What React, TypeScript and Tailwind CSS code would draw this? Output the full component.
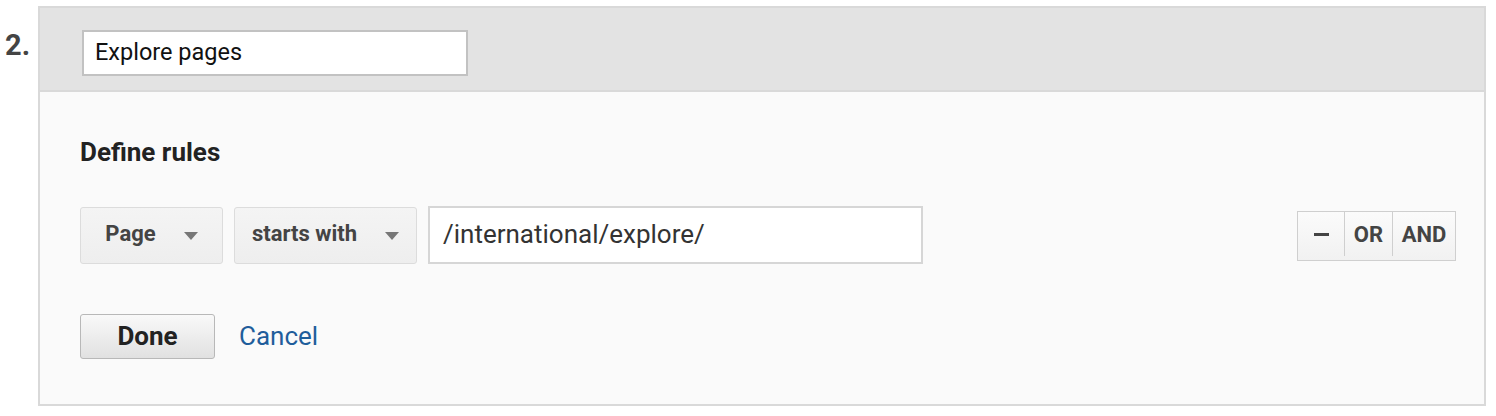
export default function App() {
  const font = { fontFamily: "Roboto, 'Liberation Sans', sans-serif" };
  return (
    <div className="flex h-[416px] w-[1496px] bg-white" style={font}>
      <div className="w-[38px] shrink-0 pl-[5px] pt-[27px] text-[29px] font-bold leading-[36px] text-[#444]">
        2.
      </div>

      <div className="mt-[6px] flex h-[400px] w-[1448px] flex-col border-2 border-[#d9d9d9]">
        <header className="h-[84px] shrink-0 border-b-2 border-[#d9d9d9] bg-[#e3e3e3] pl-[42px] pt-[22px]">
          <div className="flex h-[46px] w-[386px] items-center border-2 border-[#c2c2c2] bg-white pl-[11px] text-[23.5px] text-[#111]">
            Explore pages
          </div>
        </header>

        <div className="flex flex-1 flex-col bg-[#fafafa] pl-[40px] pr-[28px] pt-[44px]">
          <h2 className="text-[26px] font-bold leading-[32px] text-[#222]">Define rules</h2>

          <div className="mt-[38px] flex items-center">
            <Dropdown label="Page" width="w-[143px]" />
            <div className="w-[11px]" />
            <Dropdown label="starts with" width="w-[183px]" />
            <div className="ml-[11px] flex h-[58px] w-[495px] items-center border-2 border-[#d6d6d6] bg-white pb-[2px] pl-[13px] text-[26px] text-[#333]">
              /international/explore/
            </div>

            <div className="ml-auto mt-[2px] flex h-[50px] border-[1.5px] border-[#cfcfcf] bg-gradient-to-b from-[#fbfbfb] to-[#f1f1f1] pb-[4px] text-[22px] font-bold text-[#444]">
              <div className="flex w-[47px] items-center justify-center border-r-[1.5px] border-[#cfcfcf]">
                <span className="block h-[3px] w-[15px] bg-[#444]" />
              </div>
              <div className="flex w-[48px] items-center justify-center border-r-[1.5px] border-[#cfcfcf]">OR</div>
              <div className="flex w-[62px] items-center justify-center">AND</div>
            </div>
          </div>

          <div className="mt-[50px] flex items-center">
            <button className="h-[45px] w-[135px] rounded-[3px] border-[1.5px] border-[#b8b8b8] bg-gradient-to-b from-[#f9f9f9] to-[#e1e1e1] text-[26px] font-bold text-[#222]">
              Done
            </button>
            <a className="ml-[24px] text-[26px] text-[#1f5d9b]">Cancel</a>
          </div>
        </div>
      </div>
    </div>
  );
}

function Dropdown({ label, width }: { label: string; width: string }) {
  return (
    <div
      className={`${width} flex h-[57px] items-center justify-center gap-[28px] rounded-[3px] border-[1.5px] border-[#dcdcdc] bg-gradient-to-b from-[#f4f4f4] to-[#eeeeee] pb-[4px] text-[22px] font-bold text-[#444]`}
    >
      <span>{label}</span>
      <svg width="14" height="8" viewBox="0 0 14 8" className="mt-[6px]">
        <path d="M0 0h14L7 8z" fill="#777" />
      </svg>
    </div>
  );
}
